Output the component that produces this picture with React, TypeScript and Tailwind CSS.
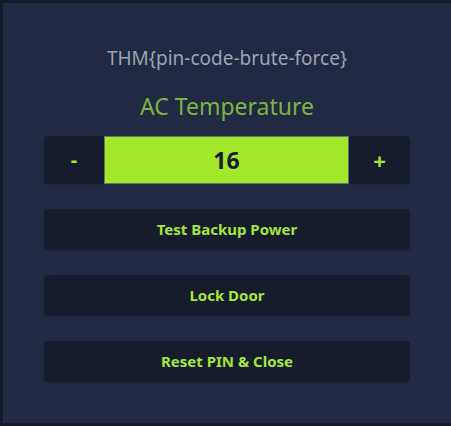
import { useState } from "react";

const font = { fontFamily: '"Noto Sans", "DejaVu Sans", sans-serif' };

export default function App() {
  const [temp, setTemp] = useState(16);

  return (
    <div className="min-h-screen bg-[#151b29] pl-[3px] pt-[3px]" style={font}>
      <div className="flex h-[420px] w-[448px] flex-col bg-[#212a42] px-[41px] pt-[41px]">
        <p className="h-[28px] text-center text-[19px] leading-[28px] text-[#9ca3af]">
          THM{"{"}pin-code-brute-force{"}"}
        </p>
        <h2 className="mt-[18px] h-[32px] text-center text-[23px] leading-[32px] text-[#7cb342]">
          AC Temperature
        </h2>
        <div className="mt-[14px] flex h-[48px]">
          <button
            type="button"
            onClick={() => setTemp((t) => t - 1)}
            className="w-[60px] rounded-l-[4px] bg-[#161c2b] text-[20px] font-bold text-[#a3e635] shadow-sm"
          >
            -
          </button>
          <input
            readOnly
            value={temp}
            className="w-[245px] border border-[#6b7280] bg-[#a3e92b] text-center text-[23px] font-bold text-[#161c2b] outline-none"
          />
          <button
            type="button"
            onClick={() => setTemp((t) => t + 1)}
            className="w-[61px] rounded-r-[4px] bg-[#161c2b] text-[22px] font-bold text-[#a3e635] shadow-sm"
          >
            +
          </button>
        </div>
        <div className="mt-[25px] flex flex-col gap-[25px]">
          {["Test Backup Power", "Lock Door", "Reset PIN & Close"].map((label) => (
            <button
              key={label}
              type="button"
              className="h-[41px] rounded-[4px] bg-[#161c2b] text-[15px] font-bold text-[#a3e635] shadow-sm"
            >
              {label}
            </button>
          ))}
        </div>
      </div>
    </div>
  );
}
